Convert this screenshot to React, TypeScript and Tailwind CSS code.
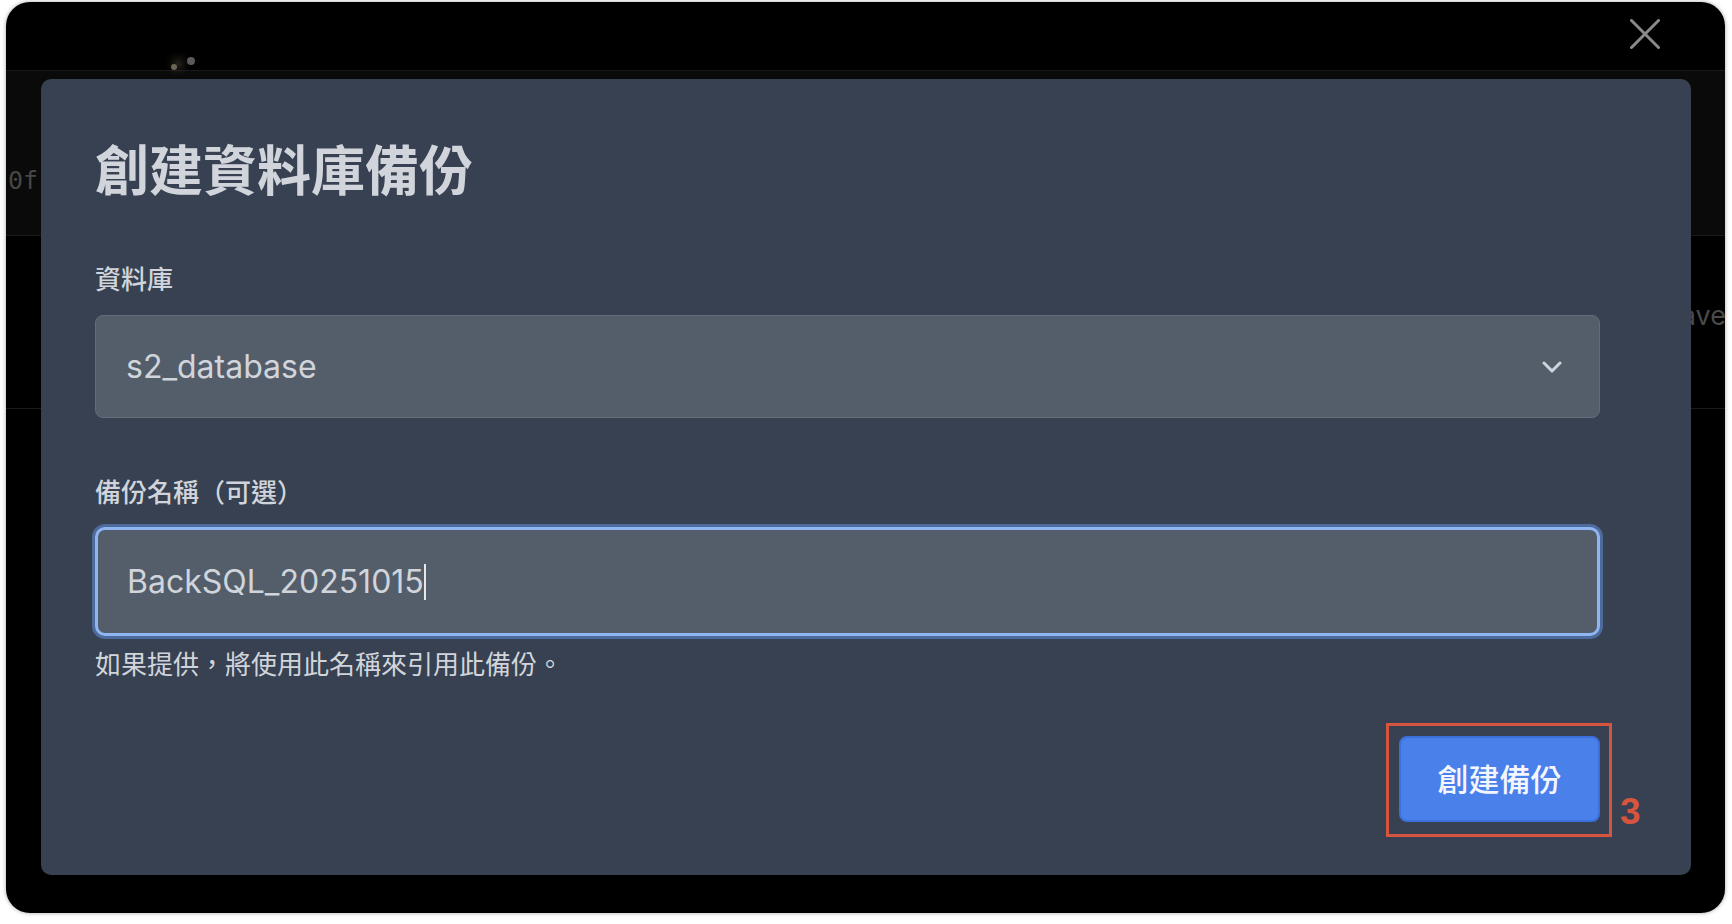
export default function App() {
  return (
    <div className="w-[1732px] h-[924px] bg-white pt-[2px] pl-[6px] overflow-hidden font-[family-name:Inter,'Noto_Sans_CJK_TC',sans-serif]">
      <div className="relative w-[1719px] h-[911px] rounded-[24px] bg-black overflow-hidden shadow-[0_0_4px_rgba(0,0,0,0.35)]">
        {/* background app (dimmed) */}
        <div className="h-[68px] flex justify-between">
          <div className="pl-[150px] pt-[44px]">
            <svg width="50" height="34" viewBox="0 0 50 34">
              <defs>
                <radialGradient id="glow">
                  <stop offset="0%" stopColor="#6b6450" stopOpacity="0.35" />
                  <stop offset="100%" stopColor="#000" stopOpacity="0" />
                </radialGradient>
              </defs>
              <circle cx="22" cy="18" r="16" fill="url(#glow)" />
              <circle cx="18" cy="21" r="3" fill="#6a6452" />
              <circle cx="35" cy="15" r="4" fill="#5a5a5a" />
            </svg>
          </div>
          <div className="pr-[65px] pt-[17px]">
            <svg width="30" height="30" viewBox="0 0 30 30">
              <line x1="1.5" y1="1.5" x2="28.5" y2="28.5" stroke="#8a8a8a" strokeWidth="3" strokeLinecap="round" />
              <line x1="28.5" y1="1.5" x2="1.5" y2="28.5" stroke="#8a8a8a" strokeWidth="3" strokeLinecap="round" />
            </svg>
          </div>
        </div>
        <div className="h-px bg-[#1a1a1a]" />
        <div className="h-[164px] bg-[#0a0a0a] pt-[97px] pl-[2px]">
          <span className="font-[family-name:'DejaVu_Sans_Mono',monospace] text-[25px] leading-[25px] text-[#464646]">0f</span>
        </div>
        <div className="h-px bg-[#1a1a1a]" />
        <div className="h-[172px] flex justify-end items-center pb-[12px]">
          <span className="mr-[-1px] text-[27px] leading-[32px] text-[#4a4a4a]">Save</span>
        </div>
        <div className="h-px bg-[#1a1a1a]" />

        {/* modal */}
        <div className="absolute left-[35px] top-[77px] w-[1650px] h-[796px] rounded-[10px] bg-[#374151] pl-[54px] pt-[66px]">
          <div className="w-[1505px] flex flex-col">
            <h1 className="text-[54px] leading-[54px] font-bold text-[#d1d5db]">創建資料庫備份</h1>
            <label className="mt-[68px] text-[26px] leading-[26px] font-medium text-[#d1d5db]">資料庫</label>
            <div className="mt-[22px] h-[103px] rounded-[8px] border border-[#636d7a] bg-[#545e6b] flex items-center justify-between pl-[30px] pr-[37px]">
              <span className="text-[32px] leading-[32px] text-[#d1d5db]">s2_database</span>
              <svg width="20" height="12" viewBox="0 0 20 12">
                <polyline points="2,2 10,10 18,2" fill="none" stroke="#d1d5db" strokeWidth="3" strokeLinecap="round" strokeLinejoin="round" />
              </svg>
            </div>
            <label className="mt-[62px] text-[26px] leading-[26px] font-medium text-[#d1d5db]">備份名稱（可選）</label>
            <div className="mt-[21px] h-[109px] rounded-[10px] border-[3px] border-[#8fb6f2] bg-[#545e6b] shadow-[0_0_0_3px_#4d6b9c] flex items-center pl-[29px]">
              <span className="text-[32px] leading-[32px] text-[#d1d5db]">BackSQL_20251015</span>
              <span className="w-[2px] h-[36px] bg-[#e5e7eb]" />
            </div>
            <p className="mt-[16px] text-[26px] leading-[26px] text-[#d1d5db]">如果提供，將使用此名稱來引用此備份。</p>
            <div className="mt-[58px] flex justify-end">
              <div className="relative">
                <button className="w-[201px] h-[86px] rounded-[8px] bg-[#4a80ea] border-2 border-[#3b6fdc] text-[31px] leading-[31px] font-medium text-[#f3f6ff]">創建備份</button>
                <div className="absolute -left-[13px] -top-[13px] -right-[12px] -bottom-[15px] border-[3px] border-[#d6553f] pointer-events-none" />
                <span className="absolute left-[221px] top-[57px] font-[family-name:'Liberation_Sans',sans-serif] text-[37px] leading-[37px] font-bold text-[#d6553f]">3</span>
              </div>
            </div>
          </div>
        </div>
      </div>
    </div>
  );
}
